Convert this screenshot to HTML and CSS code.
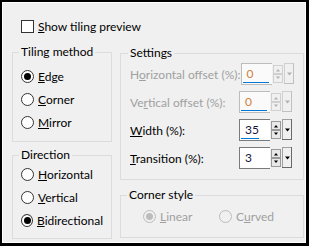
FILE: index.html
```html
<!DOCTYPE html>
<html lang="en">
<head>
  <meta charset="UTF-8" />
  <title>Seamless Tiling</title>
  <link rel="stylesheet" href="styles.css">
</head>
<body>
  <div class="dialog">
    <div class="panel">
      <label class="check-row">
        <input type="checkbox" class="check" />
        <span><u>S</u>how tiling preview</span>
      </label>

      <div class="columns">
        <div class="col col-left">
          <fieldset class="group tiling">
            <legend>Tiling method</legend>
            <label class="radio-row"><input type="radio" name="method" checked /><span><u>E</u>dge</span></label>
            <label class="radio-row"><input type="radio" name="method" /><span><u>C</u>orner</span></label>
            <label class="radio-row"><input type="radio" name="method" /><span><u>M</u>irror</span></label>
          </fieldset>

          <fieldset class="group direction">
            <legend>Direction</legend>
            <label class="radio-row"><input type="radio" name="dir" /><span><u>H</u>orizontal</span></label>
            <label class="radio-row"><input type="radio" name="dir" /><span><u>V</u>ertical</span></label>
            <label class="radio-row"><input type="radio" name="dir" checked /><span><u>B</u>idirectional</span></label>
          </fieldset>
        </div>

        <div class="col col-right">
          <fieldset class="group settings">
            <legend>Settings</legend>

            <div class="setting disabled">
              <span class="setting-label">H<u>o</u>rizontal offset (%):</span>
              <div class="spin">
                <div class="spin-field"><span class="spin-value">0</span><div class="spin-bar" style="width:26px"></div></div>
                <svg class="spin-btns" width="22" height="22" viewBox="0 0 22 22">
                  <rect x="1.5" y="2.5" width="9" height="8" fill="#f0f0f0" stroke="#d0d0d0"/>
                  <rect x="1.5" y="11.5" width="9" height="8" fill="#f0f0f0" stroke="#d0d0d0"/>
                  <path d="M4 8.5h4l-2-2.5z" fill="#b0b0b0"/>
                  <path d="M4 13.5h4l-2 2.5z" fill="#b0b0b0"/>
                  <rect x="12.5" y="0.5" width="9" height="20" fill="#f0f0f0" stroke="#d0d0d0"/>
                  <path d="M21.5 0v21M12 20.5h10" stroke="#c0c0c0"/>
                  <path d="M15 9.5h5l-2.5 3z" fill="#b0b0b0"/>
                </svg>
              </div>
            </div>

            <div class="setting disabled">
              <span class="setting-label">Ve<u>r</u>tical offset (%):</span>
              <div class="spin">
                <div class="spin-field"><span class="spin-value">0</span><div class="spin-bar" style="width:26px"></div></div>
                <svg class="spin-btns" width="22" height="22" viewBox="0 0 22 22">
                  <rect x="1.5" y="2.5" width="9" height="8" fill="#f0f0f0" stroke="#d0d0d0"/>
                  <rect x="1.5" y="11.5" width="9" height="8" fill="#f0f0f0" stroke="#d0d0d0"/>
                  <path d="M4 8.5h4l-2-2.5z" fill="#b0b0b0"/>
                  <path d="M4 13.5h4l-2 2.5z" fill="#b0b0b0"/>
                  <rect x="12.5" y="0.5" width="9" height="20" fill="#f0f0f0" stroke="#d0d0d0"/>
                  <path d="M21.5 0v21M12 20.5h10" stroke="#c0c0c0"/>
                  <path d="M15 9.5h5l-2.5 3z" fill="#b0b0b0"/>
                </svg>
              </div>
            </div>

            <div class="setting">
              <span class="setting-label"><u>W</u>idth (%):</span>
              <div class="spin">
                <div class="spin-field"><span class="spin-value">35</span><div class="spin-bar" style="width:18px"></div></div>
                <svg class="spin-btns" width="22" height="22" viewBox="0 0 22 22">
                  <rect x="1.5" y="2.5" width="9" height="8" fill="#e8e8e8" stroke="#9a9a9a"/>
                  <rect x="1.5" y="11.5" width="9" height="8" fill="#e8e8e8" stroke="#9a9a9a"/>
                  <path d="M4 8.5h4l-2-2.5z" fill="#000"/>
                  <path d="M4 13.5h4l-2 2.5z" fill="#000"/>
                  <rect x="12.5" y="0.5" width="9" height="20" fill="#f0f0f0" stroke="#a0a0a0"/>
                  <path d="M21.5 0v21M12 20.5h10" stroke="#696969"/>
                  <path d="M15 9.5h5l-2.5 3z" fill="#000"/>
                </svg>
              </div>
            </div>

            <div class="setting">
              <span class="setting-label"><u>T</u>ransition (%):</span>
              <div class="spin">
                <div class="spin-field"><span class="spin-value">3</span></div>
                <svg class="spin-btns" width="22" height="22" viewBox="0 0 22 22">
                  <rect x="1.5" y="2.5" width="9" height="8" fill="#e8e8e8" stroke="#9a9a9a"/>
                  <rect x="1.5" y="11.5" width="9" height="8" fill="#e8e8e8" stroke="#9a9a9a"/>
                  <path d="M4 8.5h4l-2-2.5z" fill="#000"/>
                  <path d="M4 13.5h4l-2 2.5z" fill="#000"/>
                  <rect x="12.5" y="0.5" width="9" height="20" fill="#f0f0f0" stroke="#a0a0a0"/>
                  <path d="M21.5 0v21M12 20.5h10" stroke="#696969"/>
                  <path d="M15 9.5h5l-2.5 3z" fill="#000"/>
                </svg>
              </div>
            </div>
          </fieldset>

          <fieldset class="group corner">
            <legend>Corner style</legend>
            <div class="corner-row">
              <label class="radio-row disabled"><input type="radio" name="corner" checked disabled /><span><u>L</u>inear</span></label>
              <label class="radio-row disabled"><input type="radio" name="corner" disabled /><span>C<u>u</u>rved</span></label>
            </div>
          </fieldset>
        </div>
      </div>
    </div>
  </div>
</body>
</html>
```

FILE: styles.css
```css
* {
  box-sizing: border-box;
}

body {
  margin: 0;
  font-family: "Segoe UI", Lato, "Noto Sans", sans-serif;
  font-size: 12px;
  color: #000;
}

u {
  text-underline-offset: 1px;
}

.dialog {
  width: 309px;
  height: 246px;
  border: 2px solid #000;
  border-right-width: 3px;
  border-bottom-width: 3px;
}

.panel {
  height: 100%;
  border: 1px solid #fff;
  background: #f0f0f0;
  padding: 17px 1px 0 9px;
}

/* checkbox row */

.check-row {
  display: flex;
  align-items: center;
  gap: 4px;
  height: 13px;
  margin-left: 9px;
  white-space: nowrap;
}

.check {
  appearance: none;
  margin: 0;
  width: 13px;
  height: 13px;
  border: 1px solid #333;
  background: #fff;
}

/* columns */

.columns {
  display: flex;
  gap: 8px;
  margin-top: 11px;
}

.col {
  display: flex;
  flex-direction: column;
}

.col-left {
  width: 100px;
}

.col-right {
  width: 184px;
  margin-top: 1px;
}

.group {
  margin: 0;
  min-width: 0;
  border: 1px solid #dcdcdc;
  padding: 0 8px;
}

.group legend {
  padding: 0 2px;
  margin-left: -2px;
  line-height: 16px;
}

.tiling {
  padding-top: 5px;
  padding-bottom: 7px;
}

.direction {
  margin-top: 5px;
  padding-bottom: 6px;
}

/* radios */

.radio-row {
  display: flex;
  align-items: center;
  gap: 4px;
  height: 23px;
  white-space: nowrap;
}

.radio-row input {
  appearance: none;
  margin: 0;
  width: 13px;
  height: 13px;
  border: 1px solid #333;
  border-radius: 50%;
  background: #fff;
  display: grid;
  place-items: center;
}

.radio-row input:checked::after {
  content: "";
  width: 7px;
  height: 7px;
  border-radius: 50%;
  background: #000;
}

.radio-row.disabled {
  color: #a0a0a0;
}

.radio-row.disabled input {
  border-color: #bcbcbc;
  background: #f0f0f0;
}

.radio-row.disabled input:checked::after {
  background: #bcbcbc;
}

/* settings */

.settings {
  padding: 2px 11px 10px 9px;
  display: flex;
  flex-direction: column;
  gap: 6px;
}

.setting {
  display: flex;
  align-items: center;
  height: 22px;
  white-space: nowrap;
}

.setting-label {
  flex: 1;
}

.setting.disabled .setting-label {
  color: #a0a0a0;
}

.spin {
  display: flex;
  width: 53px;
  height: 22px;
}

.spin-field {
  width: 31px;
  height: 22px;
  border: 1px solid #7a7a7a;
  border-right: none;
  background: #fff;
  padding: 2px 0 1px 1px;
  display: flex;
  flex-direction: column;
  justify-content: space-between;
}

.spin-value {
  padding-left: 4px;
  line-height: 16px;
  color: #14143c;
}

.spin-bar {
  height: 2px;
  background: #0078d7;
}

.setting.disabled .spin-field {
  border-color: #bcbcbc;
  background: #fafafa;
}

.setting.disabled .spin-value {
  color: #d08040;
}

.spin-btns {
  display: block;
}

/* corner style */

.corner {
  margin-top: 7px;
  padding: 2px 8px 9px 8px;
}

.corner-row {
  display: flex;
  padding-left: 14px;
}

.corner-row .radio-row {
  width: 82px;
}
```
